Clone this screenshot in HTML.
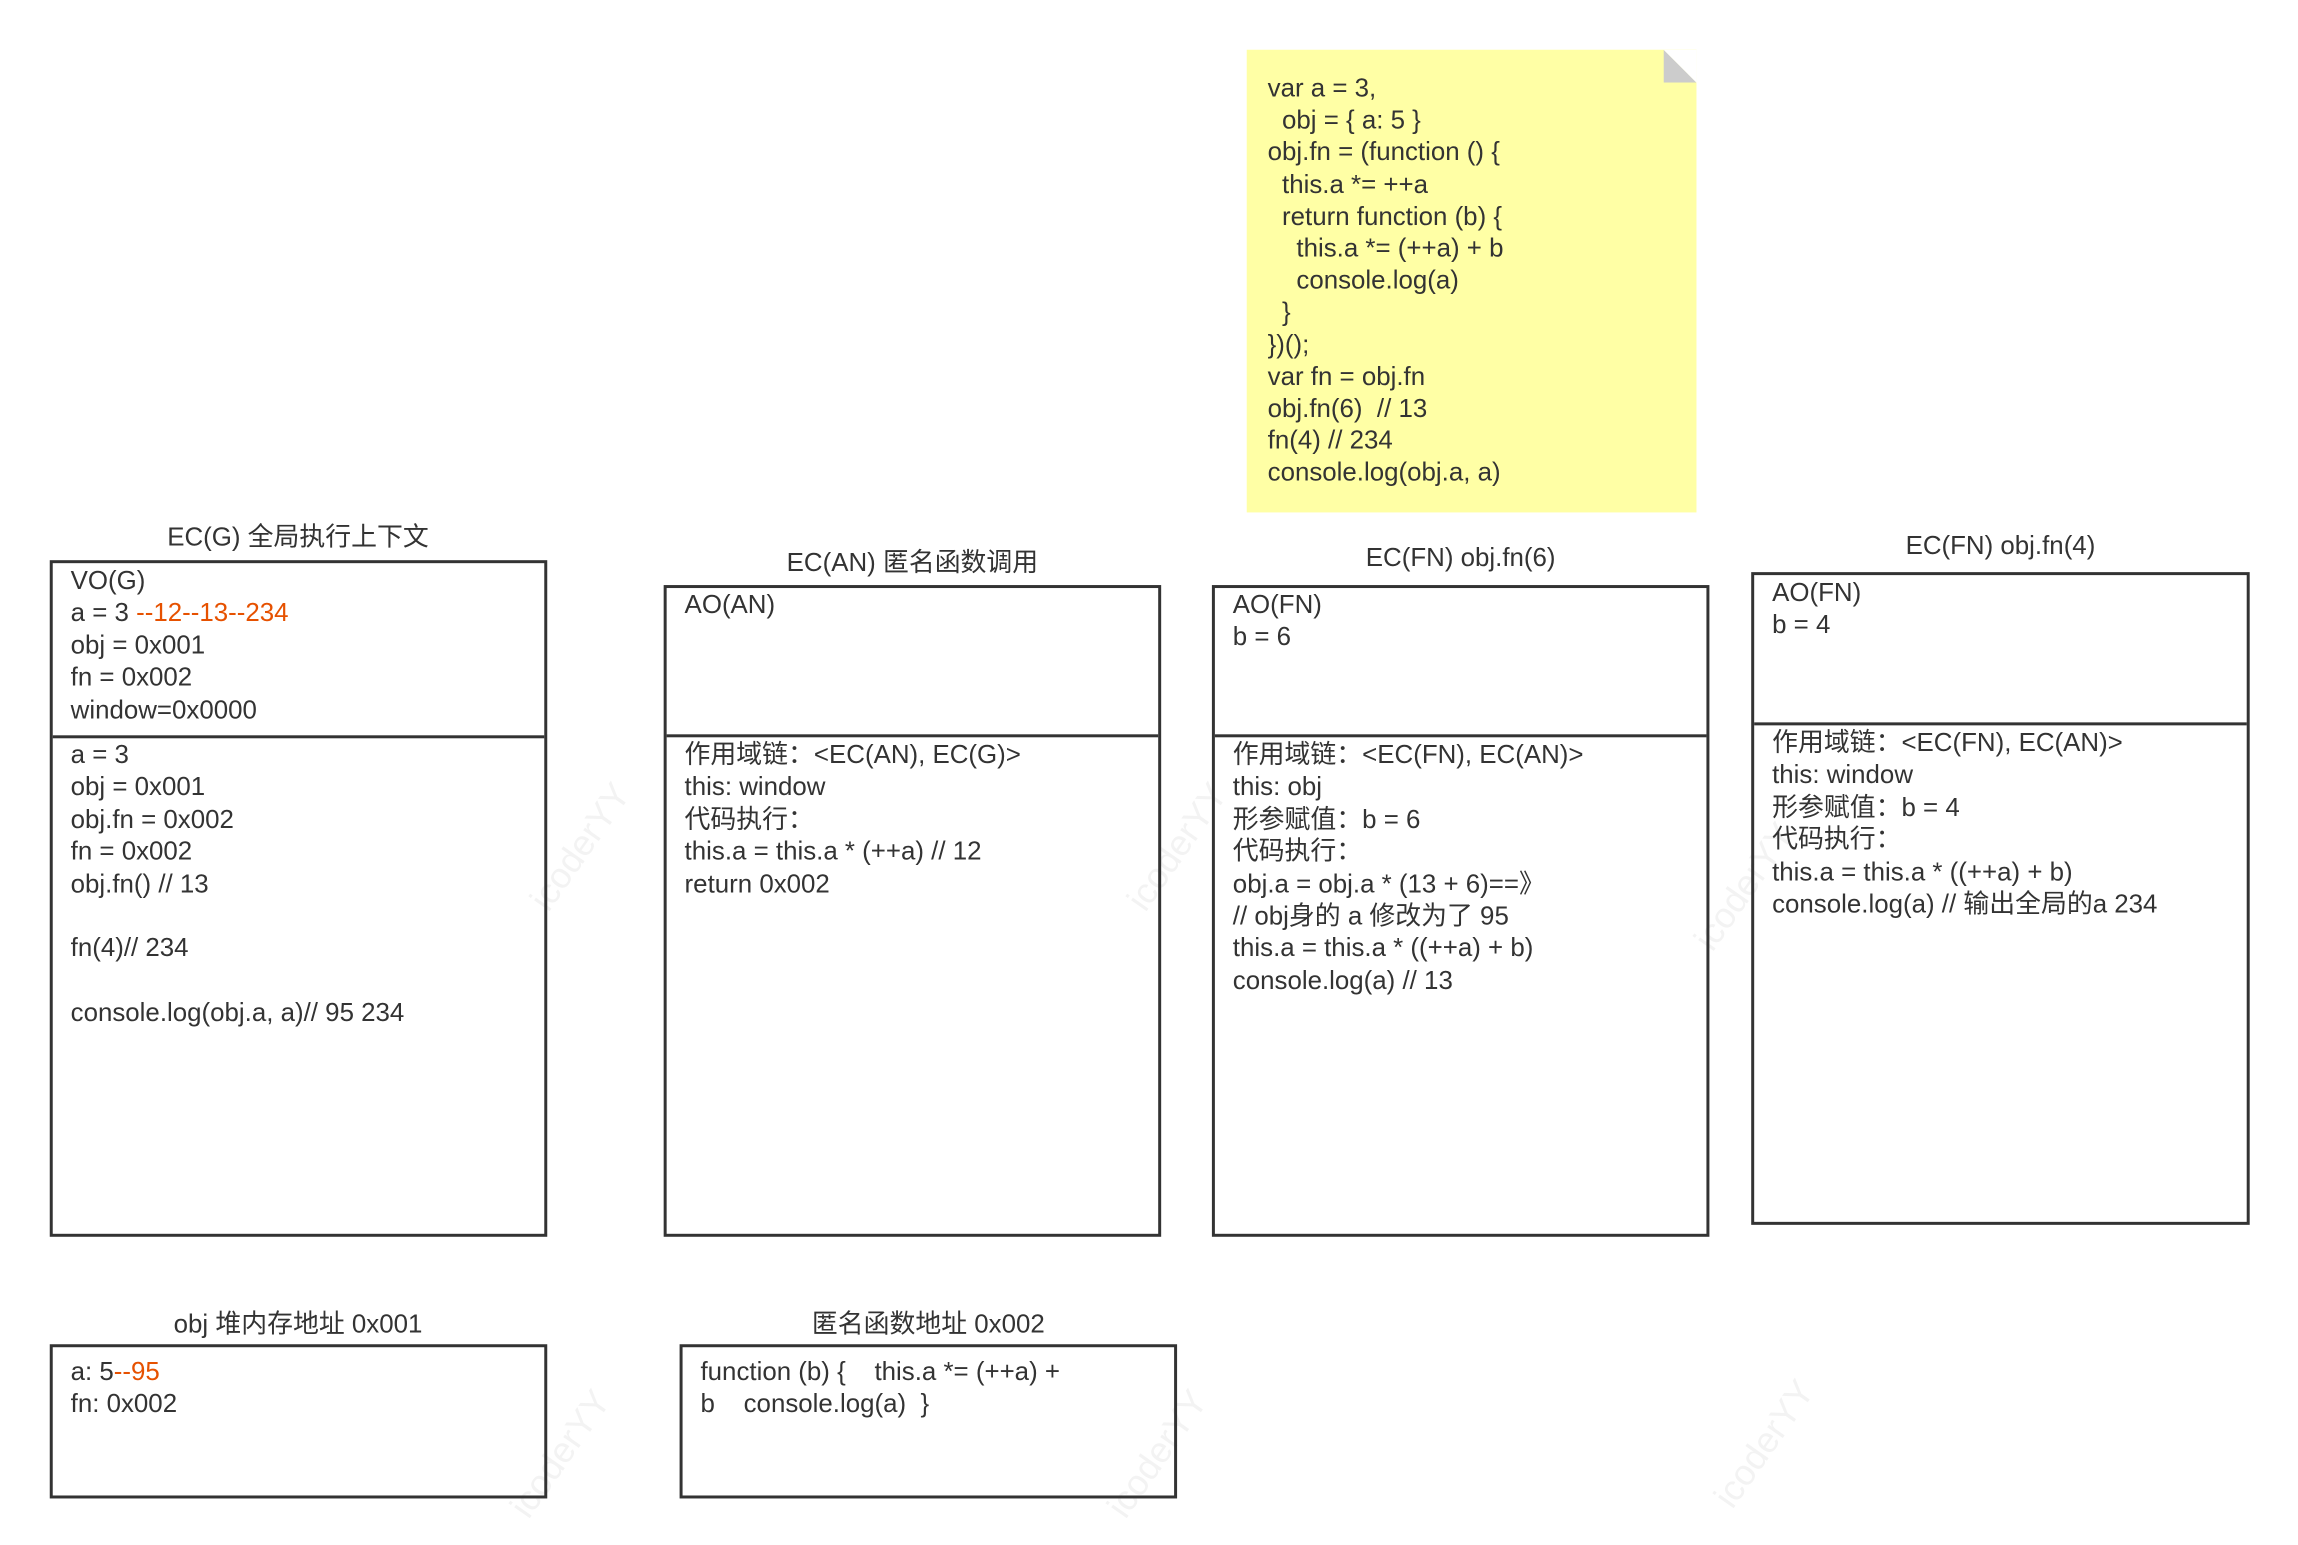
<!DOCTYPE html>
<html><head><meta charset="utf-8"><style>
body{margin:0;width:2298px;height:1545px;background:#fff;position:relative;overflow:hidden;font-family:"Liberation Sans","Noto Sans CJK SC",sans-serif;color:#333;font-size:26px;}
#wrap{position:absolute;left:0;top:0;width:2298px;height:1545px;transform:scale(0.995);transform-origin:0 0;}
.b{position:absolute;border:3px solid #333;box-sizing:border-box;}
.d{position:absolute;left:0;right:0;border-top:3px solid #333;}
.t{position:absolute;white-space:pre;line-height:32.4px;}
.h{position:absolute;text-align:center;white-space:pre;}
.o{color:#e65100;}
.w{position:absolute;color:#f3f3f3;font-size:36px;transform:rotate(-55deg);}
</style></head><body><div id="wrap">
<div class="w" style="left:510px;top:830px">icoderYY</div>
<div class="w" style="left:1110px;top:830px">icoderYY</div>
<div class="w" style="left:1680px;top:870px">icoderYY</div>
<div class="w" style="left:490px;top:1440px">icoderYY</div>
<div class="w" style="left:1090px;top:1440px">icoderYY</div>
<div class="w" style="left:1700px;top:1430px">icoderYY</div>

<div style="position:absolute;left:1253px;top:50px;width:452px;height:465px;background:#ffffa5;"></div>
<svg style="position:absolute;left:1672px;top:50px" width="33" height="33"><polygon points="0,0 33,33 0,33" fill="#ccc"/><polygon points="0,0 33,0 33,33" fill="#fff"/></svg>
<div class="t" style="left:1274px;top:72px;line-height:32.2px">var a = 3,
  obj = { a: 5 }
obj.fn = (function () {
  this.a *= ++a
  return function (b) {
    this.a *= (++a) + b
    console.log(a)
  }
})();
var fn = obj.fn
obj.fn(6)  // 13
fn(4) // 234
console.log(obj.a, a)</div>

<div class="h" style="left:50px;width:499px;top:519px">EC(G) 全局执行上下文</div>
<div class="b" style="left:50px;top:563px;width:500px;height:680px"><div class="d" style="top:173px"></div></div>
<div class="t" style="left:71px;top:567px">VO(G)
a = 3 <span class="o">--12--13--234</span>
obj = 0x001
fn = 0x002
window=0x0000</div>
<div class="t" style="left:71px;top:742px">a = 3
obj = 0x001
obj.fn = 0x002
fn = 0x002
obj.fn() // 13

fn(4)// 234

console.log(obj.a, a)// 95 234</div>

<div class="h" style="left:667px;width:500px;top:545px">EC(AN) 匿名函数调用</div>
<div class="b" style="left:667px;top:588px;width:500px;height:655px"><div class="d" style="top:147px"></div></div>
<div class="t" style="left:688px;top:591px">AO(AN)</div>
<div class="t" style="left:688px;top:742px">作用域链：&lt;EC(AN), EC(G)&gt;
this: window
代码执行：
this.a = this.a * (++a) // 12
return 0x002</div>

<div class="h" style="left:1218px;width:500px;top:545px">EC(FN) obj.fn(6)</div>
<div class="b" style="left:1218px;top:588px;width:500px;height:655px"><div class="d" style="top:147px"></div></div>
<div class="t" style="left:1239px;top:591px">AO(FN)
b = 6</div>
<div class="t" style="left:1239px;top:742px">作用域链：&lt;EC(FN), EC(AN)&gt;
this: obj
形参赋值：b = 6
代码执行：
obj.a = obj.a * (13 + 6)==》
// obj身的 a 修改为了 95
this.a = this.a * ((++a) + b)
console.log(a) // 13</div>

<div class="h" style="left:1760px;width:501px;top:533px">EC(FN) obj.fn(4)</div>
<div class="b" style="left:1760px;top:575px;width:501px;height:656px"><div class="d" style="top:148px"></div></div>
<div class="t" style="left:1781px;top:579px">AO(FN)
b = 4</div>
<div class="t" style="left:1781px;top:730px">作用域链：&lt;EC(FN), EC(AN)&gt;
this: window
形参赋值：b = 4
代码执行：
this.a = this.a * ((++a) + b)
console.log(a) // 输出全局的a 234</div>

<div class="h" style="left:50px;width:499px;top:1310px">obj 堆内存地址 0x001</div>
<div class="b" style="left:50px;top:1351px;width:500px;height:155px"></div>
<div class="t" style="left:71px;top:1362px">a: 5<span class="o">--95</span>
fn: 0x002</div>

<div class="h" style="left:683px;width:500px;top:1310px">匿名函数地址 0x002</div>
<div class="b" style="left:683px;top:1351px;width:500px;height:155px"></div>
<div class="t" style="left:704px;top:1362px">function (b) {    this.a *= (++a) +
b    console.log(a)  }</div>
</div></body></html>
